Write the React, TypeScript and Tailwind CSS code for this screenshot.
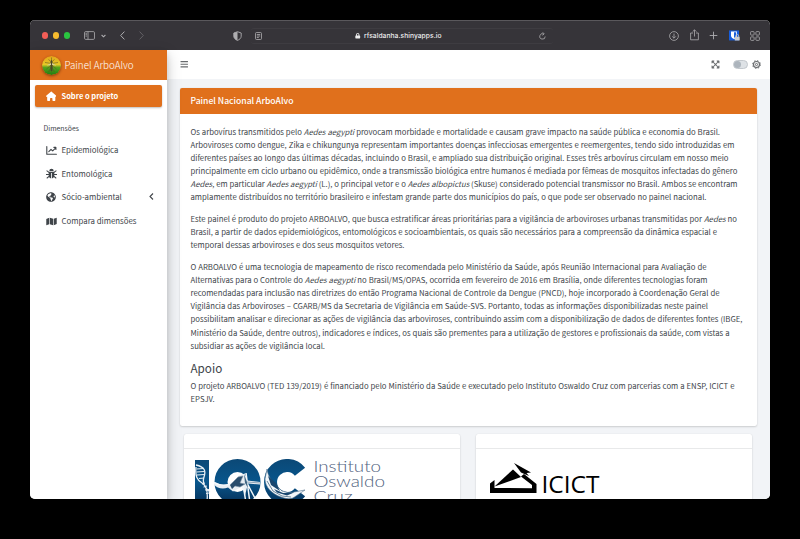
import type { ReactNode } from "react";
import { FaBars, FaExpandArrowsAlt, FaGlobeAmericas, FaLock } from "react-icons/fa";
import { FaHouse } from "react-icons/fa6";

type TextLine = { width: string; content: ReactNode };

const intro: TextLine[] = [
  { width: "w-[529.5px]", content: <>Os arbovírus transmitidos pelo <i>Aedes aegypti</i> provocam morbidade e mortalidade e causam grave impacto na saúde pública e economia do Brasil.</> },
  { width: "w-[544px]", content: <>Arboviroses como dengue, Zika e chikungunya representam importantes doenças infecciosas emergentes e reemergentes, tendo sido introduzidas em</> },
  { width: "w-[538px]", content: <>diferentes países ao longo das últimas décadas, incluindo o Brasil, e ampliado sua distribuição original. Esses três arbovírus circulam em nosso meio</> },
  { width: "w-[547px]", content: <>principalmente em ciclo urbano ou epidêmico, onde a transmissão biológica entre humanos é mediada por fêmeas de mosquitos infectadas do gênero</> },
  { width: "w-[547px]", content: <><i>Aedes</i>, em particular <i>Aedes aegypti</i> (L.), o principal vetor e o <i>Aedes albopictus</i> (Skuse) considerado potencial transmissor no Brasil. Ambos se encontram</> },
  { width: "w-[516px]", content: <>amplamente distribuídos no território brasileiro e infestam grande parte dos municípios do país, o que pode ser observado no painel nacional.</> },
];

const product: TextLine[] = [
  { width: "w-[546.5px]", content: <>Este painel é produto do projeto ARBOALVO, que busca estratificar áreas prioritárias para a vigilância de arboviroses urbanas transmitidas por <i>Aedes</i> no</> },
  { width: "w-[526.5px]", content: <>Brasil, a partir de dados epidemiológicos, entomológicos e socioambientais, os quais são necessários para a compreensão da dinâmica espacial e</> },
  { width: "w-[214px]", content: <>temporal dessas arboviroses e dos seus mosquitos vetores.</> },
];

const technology: TextLine[] = [
  { width: "w-[516px]", content: <>O ARBOALVO é uma tecnologia de mapeamento de risco recomendada pelo Ministério da Saúde, após Reunião Internacional para Avaliação de</> },
  { width: "w-[517px]", content: <>Alternativas para o Controle do <i>Aedes aegypti</i> no Brasil/MS/OPAS, ocorrida em fevereiro de 2016 em Brasília, onde diferentes tecnologias foram</> },
  { width: "w-[529px]", content: <>recomendadas para inclusão nas diretrizes do então Programa Nacional de Controle da Dengue (PNCD), hoje incorporado à Coordenação Geral de</> },
  { width: "w-[517.5px]", content: <>Vigilância das Arboviroses – CGARB/MS da Secretaria de Vigilância em Saúde-SVS. Portanto, todas as informações disponibilizadas neste painel</> },
  { width: "w-[552px]", content: <>possibilitam analisar e direcionar as ações de vigilância das arboviroses, contribuindo assim com a disponibilização de dados de diferentes fontes (IBGE,</> },
  { width: "w-[539px]", content: <>Ministério da Saúde, dentre outros), indicadores e índices, os quais são prementes para a utilização de gestores e profissionais da saúde, com vistas a</> },
  { width: "w-[134.5px]", content: <>subsidiar as ações de vigilância local.</> },
];

const support: TextLine[] = [
  { width: "w-[544px]", content: <>O projeto ARBOALVO (TED 139/2019) é financiado pelo Ministério da Saúde e executado pelo Instituto Oswaldo Cruz com parcerias com a ENSP, ICICT e</> },
  { width: "w-[23.5px]", content: <>EPSJV.</> },
];

function Paragraph({ lines }: { lines: TextLine[] }) {
  return (
    <p className="mb-[8.75px]">
      {lines.map((line, i) => (
        <span key={i} className={`block h-[13.12px] whitespace-nowrap [text-align-last:justify] ${line.width}`}>
          {line.content}
        </span>
      ))}
    </p>
  );
}

function TitleBar() {
  return (
    <div className="flex h-[30px] shrink-0 items-center border-t border-[#5a585c] bg-[#363439] text-[#aeadb0]">
      <div className="flex w-[60px] gap-[4.5px] pl-[11.5px]">
        <span className="size-[6.6px] rounded-full bg-[#f25e57]" />
        <span className="size-[6.6px] rounded-full bg-[#f6bb2e]" />
        <span className="size-[6.6px] rounded-full bg-[#2ac440]" />
      </div>
      <div className="flex w-[142px] items-center">
        <svg className="ml-[-6px] h-[9px] w-[11px]" viewBox="0 0 11 9" fill="none" stroke="currentColor" strokeWidth="0.8">
          <rect x="0.5" y="0.6" width="10" height="7.8" rx="1.2" />
          <path d="M4 .6v7.8M1.5 2.3h1.4M1.5 3.7h1.4M1.5 5.1h1.4" />
        </svg>
        <svg className="ml-[6px] h-[4px] w-[5px]" viewBox="0 0 5 4" fill="none" stroke="currentColor" strokeWidth="1.1"><path d="M.6 1 2.5 2.8 4.4 1" /></svg>
        <svg className="ml-[13.5px] h-[9px] w-[5px]" viewBox="0 0 5 9" fill="none" stroke="currentColor" strokeWidth="1"><path d="M4.4.6.7 4.5l3.7 3.9" /></svg>
        <svg className="ml-[14.5px] h-[9px] w-[5px] text-[#636166]" viewBox="0 0 5 9" fill="none" stroke="currentColor" strokeWidth="1"><path d="m.6.6 3.7 3.9L.6 8.4" /></svg>
      </div>
      <svg className="ml-[1px] h-[10px] w-[9px]" viewBox="0 0 9 10">
        <path d="M4.5.7 8.2 2v3.2c0 2-1.6 3.3-3.7 4.2C2.4 8.5.8 7.2.8 5.2V2z" fill="none" stroke="currentColor" strokeWidth=".9" />
        <path d="M4.5.7v8.7C2.4 8.5.8 7.2.8 5.2V2z" fill="currentColor" />
      </svg>
      <div className="ml-[8.5px] flex h-[16px] w-[302px] items-center rounded-[3px] border-y border-[#3e3c41] px-[4px]">
        <svg className="h-[8px] w-[7px]" viewBox="0 0 7 8" fill="none" stroke="currentColor" strokeWidth=".8">
          <rect x=".5" y=".5" width="6" height="7" rx="1" />
          <path d="M1.8 2.5h3.4M1.8 4h3.4M1.8 5.5h2" />
        </svg>
        <div className="flex flex-1 items-center justify-center gap-[3px] pt-[1px] pr-[3px] font-['Inter'] text-[6.7px] font-medium tracking-[0.05px] text-[#eeeeef]">
          <FaLock className="size-[5.5px]" />
          <span>rfsaldanha.shinyapps.io</span>
        </div>
        <svg className="mr-[3px] h-[8px] w-[7px]" viewBox="0 0 7 8" fill="none" stroke="currentColor" strokeWidth=".8">
          <path d="M6.2 4.5a2.7 2.7 0 1 1-1.5-2.500M3.7.3l1.500 1.600-1.700 1.400" />
        </svg>
      </div>
      <div className="ml-auto flex items-center gap-[10.5px] pr-[10px]">
        <svg className="size-[10px]" viewBox="0 0 10 10" fill="none" stroke="currentColor" strokeWidth=".8">
          <circle cx="5" cy="5" r="4.4" />
          <path d="M5 2.5v4.700M3.200 5.400 5 7.200l1.800-1.800" />
        </svg>
        <svg className="mt-[-1px] h-[12px] w-[9px]" viewBox="0 0 9 12" fill="none" stroke="currentColor" strokeWidth=".8">
          <path d="M3 4H.6v6.800h7.800V4H6M4.500 7.500V.9M2.600 2.700 4.500.8l1.900 1.900" />
        </svg>
        <svg className="mt-[-1px] size-[9px]" viewBox="0 0 9 9" fill="none" stroke="currentColor" strokeWidth=".9"><path d="M4.5.7v7.600M.7 4.500h7.600" /></svg>
        <svg className="h-[11px] w-[11px]" viewBox="0 0 11 11">
          <rect width="10" height="10" y=".4" fill="#175ddc" />
          <path d="M2 1.500h6v4.300c0 1.500-1.500 2.600-3 3.300-1.500-.7-3-1.800-3-3.300z" fill="#fff" />
          <path d="M5 2.300h2.200v3.500C7.200 6.800 6 7.500 5 8z" fill="#175ddc" />
          <path d="M6.800 7V6a1.500 1.500 0 0 1 3 0v1" fill="none" stroke="#b5b7bc" strokeWidth=".9" />
          <rect x="5.700" y="6.800" width="5" height="3.800" rx=".7" fill="#c9cacd" />
        </svg>
        <svg className="size-[10px]" viewBox="0 0 10 10" fill="none" stroke="currentColor" strokeWidth=".8">
          <rect x=".6" y=".6" width="3.500" height="3.500" rx=".7" />
          <rect x="5.900" y=".6" width="3.500" height="3.500" rx=".7" />
          <rect x=".6" y="5.900" width="3.500" height="3.500" rx=".7" />
          <rect x="5.900" y="5.900" width="3.500" height="3.500" rx=".7" />
        </svg>
      </div>
    </div>
  );
}

function BrandLogo() {
  return (
    <svg className="size-[19px] rounded-full shadow-[0_1px_3px_rgba(0,0,0,0.45)]" viewBox="0 0 19 19">
      <defs>
        <linearGradient id="sky" x1="0" y1="0" x2="0" y2="1">
          <stop offset="0" stopColor="#e3a51a" />
          <stop offset=".45" stopColor="#e6c927" />
          <stop offset=".6" stopColor="#57a51d" />
          <stop offset="1" stopColor="#1e7d12" />
        </linearGradient>
      </defs>
      <circle cx="9.500" cy="9.500" r="9.500" fill="url(#sky)" />
      <path d="M9.500 1.500v15M9.500 6 6.500 3.500M9.500 6l3-2.500M9.500 7.500 3 6.500M9.500 7.500l6.500-1M9.500 9l-5 4M9.500 9l5 4M9.500 10.500 6.500 16M9.500 10.500l3 5.500" stroke="#5c5220" strokeWidth=".55" fill="none" />
      <path d="M9.500 4c1.300 1 1.300 4 .8 11h-1.600C8.200 8 8.200 5 9.500 4z" fill="#4a4628" />
      <path d="M9 7 4.500 9.500l4.500-.4zM10 7l4.500 2.500-4.500-.4z" fill="#d8cf95" />
    </svg>
  );
}

function ChartIcon() {
  return (
    <svg className="h-[9px] w-[11px]" viewBox="0 0 11 9" fill="none" stroke="currentColor" strokeWidth="1.100" strokeLinejoin="round" strokeLinecap="round">
      <path d="M.8.600v7.600h9.600M2.800 5.600 5 3.300l1.700 1.500 3-3M7.900 1.400h2v2" />
    </svg>
  );
}

function BugIcon() {
  return (
    <svg className="h-[11px] w-[11px]" viewBox="0 0 11 11">
      <path d="M3.300 3a2.200 2.200 0 0 1 4.400 0z" fill="currentColor" />
      <path d="M2.700 3.700h5.600v3.600c0 1.900-1 2.900-2.400 3.100V5h-.8v5.400C3.700 10.200 2.700 9.200 2.700 7.300z" fill="currentColor" />
      <path d="M3 4.400 1 2.900M8 4.400l2-1.500M2.800 6.500H.3M8.200 6.500h2.500M3 8.300 1.100 10M8 8.300 9.900 10" stroke="currentColor" strokeWidth="1.050" strokeLinecap="round" />
    </svg>
  );
}

function MapIcon() {
  return (
    <svg className="h-[9px] w-[12px]" viewBox="0 0 12 9" fill="currentColor">
      <path d="M.3 1.700 3.500.4v7L.3 8.700zM4.200.4l3.600 1.200v7L4.200 7.400zM8.500 1.600 11.700.3v7L8.500 8.600z" />
    </svg>
  );
}

function GearIcon() {
  return (
    <svg className="ml-[4px] size-[9px]" viewBox="0 0 18 18" fill="none" stroke="currentColor">
      <circle cx="9" cy="9" r="6" strokeWidth="2.200" />
      <circle cx="9" cy="9" r="7.800" strokeWidth="2" strokeDasharray="3 3.126" />
      <circle cx="9" cy="9" r="2.200" strokeWidth="2" />
    </svg>
  );
}

function NavItem({ icon, label, chevron }: { icon: ReactNode; label: string; chevron?: boolean }) {
  return (
    <div className="flex h-[23.6px] items-center pr-[8.5px] pl-[10.5px] text-[#40454a]">
      <span className="flex w-[11px] justify-center pt-[1px]">{icon}</span>
      <span className="ml-[5px] text-[7.85px]">{label}</span>
      {chevron && (
        <svg className="ml-auto h-[7px] w-[5px]" viewBox="0 0 5 7" fill="none" stroke="currentColor" strokeWidth="1.100">
          <path d="M4 .5 1 3.500l3 3" />
        </svg>
      )}
    </div>
  );
}

function Sidebar() {
  return (
    <aside className="z-10 w-[137px] shrink-0 bg-white shadow-[0_5px_14px_rgba(0,0,0,0.2),0_3px_6px_rgba(0,0,0,0.12)]">
      <div className="flex h-[30px] items-center bg-[#e0701c] pl-[11.5px] text-white">
        <BrandLogo />
        <span className="ml-[4px] text-[9.8px] font-light">Painel ArboAlvo</span>
      </div>
      <nav className="px-[5px] pt-[5px]">
        <div className="flex h-[22px] items-center rounded-[2px] bg-[#e0701c] pl-[10.5px] text-white shadow-[0_1px_2px_rgba(0,0,0,0.25)]">
          <FaHouse className="size-[10.5px]" />
          <span className="ml-[5.5px] text-[7.5px] font-bold">Sobre o projeto</span>
        </div>
        <div className="mt-[15px] mb-[3px] flex h-[13px] items-center pl-[8.5px] text-[6.9px] text-[#40454a]">Dimensões</div>
        <NavItem icon={<ChartIcon />} label="Epidemiológica" />
        <NavItem icon={<BugIcon />} label="Entomológica" />
        <NavItem icon={<FaGlobeAmericas className="size-[10px]" />} label="Sócio-ambiental" chevron />
        <NavItem icon={<MapIcon />} label="Compara dimensões" />
      </nav>
    </aside>
  );
}

function IocLogo() {
  return (
    <svg className="h-[50px] w-[210px]" viewBox="0 0 210 50">
      <defs>
        <linearGradient id="navy" gradientUnits="userSpaceOnUse" x1="0" y1="0" x2="0" y2="46">
          <stop offset="0" stopColor="#0b4876" />
          <stop offset=".5" stopColor="#08568c" />
          <stop offset="1" stopColor="#062f57" />
        </linearGradient>
      </defs>
      <path d="M1 1h14v44H1z" fill="url(#navy)" />
      <circle cx="43.500" cy="23" r="16.500" fill="none" stroke="url(#navy)" strokeWidth="13" />
      <path d="M106 12.800a16.500 16.500 0 1 0 0 20.400" fill="none" stroke="url(#navy)" strokeWidth="13" />
      <path d="M2 6c9 2 10 6 8 12s1 11 6 15M2 8c-1 9 1 13 6 16s6 9 5 18" fill="none" stroke="#e9f0f5" strokeWidth="1.300" />
      <path d="m2.500 10 7.500-.5M2.500 13l8-.5M3 16l7.500-.5M5 19.500l5-.5M8 25l3-1M9.500 28l3.500-1M11 31l4-.5M12 34.500l3-.5" stroke="#e9f0f5" strokeWidth="1" />
      <path d="M20 23c7 3.500 13 4 19 0l6-6.500 6-2 2 7 13 1.500v2.500l-12-1-3 12-3-9-9 5-5-4c-5 2-11 1-14-3z" fill="#e8eef3" />
      <path d="M20 23.500c7 4 13 4 20-.5M52 14l4 30M53 24l9 17M49 25l3 19" fill="none" stroke="#f3f7fa" strokeWidth="1.500" />
      <path d="m36 26 8-8 5-1-3 7 5 1-5 3-5-1-3 3" fill="#284c6c" stroke="#7890a5" strokeWidth=".6" />
      <path d="m50 15 3 8 1 6-3-5" fill="#416785" />
      <path d="m53 23 13 1" stroke="#64839c" strokeWidth=".7" />
      <path d="M73 10c1 7 4 11 8 15l7 7c5 1 8 3 12 1l11-2-9 6c-5 4-9 3-15 1-9-3-16-10-16-18z" fill="#f2f6f9" stroke="#4d6d89" strokeWidth=".6" />
      <path d="m74 17 3 9 9 6-4-8zM80 30l9 4 11-.5-7 3-10-3z" fill="#18466f" />
      <path d="m73 22 6 10 9 5 9 1" fill="none" stroke="#315777" strokeWidth=".7" />
      <g fill="#51627e" fontFamily="Lato" fontWeight="300" fontSize="15.500">
        <text x="119.500" y="13" textLength="67.500" lengthAdjust="spacingAndGlyphs">Instituto</text>
        <text x="119.500" y="28" textLength="71.500" lengthAdjust="spacingAndGlyphs">Oswaldo</text>
        <text x="119.500" y="43" textLength="39" lengthAdjust="spacingAndGlyphs">Cruz</text>
      </g>
    </svg>
  );
}

function IcictLogo() {
  return (
    <svg className="h-[34px] w-[114px]" viewBox="0 0 114 34">
      <path d="M0 20.500 4.500 17v8l37.500.2V22L31 13.500l3-2.500 12.500 10v9H0z" />
      <path d="M4.500 23.500 23 6.500l8 7.500z" />
      <path d="m24 0 17 9.500-4.500.5 2.500 3-8-3.500z" />
      <text x="51.500" y="30" fontFamily="Open Sans" fontSize="24.500" textLength="58" lengthAdjust="spacingAndGlyphs">ICICT</text>
    </svg>
  );
}

export default function App() {
  return (
    <div className="h-[539px] w-[800px] overflow-hidden bg-black px-[30px] pt-[20px] font-['Noto_Sans_CJK_SC',sans-serif] text-[#40454a]">
      <div className="flex h-[479px] w-[740px] flex-col overflow-hidden rounded-[5px] bg-white">
        <TitleBar />
        <div className="flex min-h-0 flex-1">
          <Sidebar />
          <div className="flex min-w-0 flex-1 flex-col bg-[#f2f4f7]">
            <header className="flex h-[29px] shrink-0 items-center bg-white pr-[9px] pl-[13px] text-[#686b6e]">
              <FaBars className="size-[8.5px]" />
              <FaExpandArrowsAlt className="ml-auto size-[9px]" />
              <span className="ml-[13px] flex h-[8.5px] w-[15px] items-center rounded-full border border-[#c3c8cd] bg-[#dee2e6]">
                <span className="h-[6.5px] w-[7px] rounded-full bg-[#adb5bd]" />
              </span>
              <GearIcon />
            </header>
            <main className="min-h-0 flex-1 overflow-hidden pt-[9px] pr-[13px] pl-[13px]">
              <section className="h-[338px] overflow-hidden rounded-[2px] bg-white shadow-[0_0_1px_rgba(0,0,0,0.13),0_1px_2px_rgba(0,0,0,0.15)]">
                <h3 className="flex h-[25.5px] items-center bg-[#e0701c] pl-[10.5px] text-[8.6px] font-medium text-white">Painel Nacional ArboAlvo</h3>
                <div className="pt-[11px] pl-[10.5px] text-[7.75px] leading-[13.12px]">
                  <Paragraph lines={intro} />
                  <Paragraph lines={product} />
                  <Paragraph lines={technology} />
                  <h4 className="mb-[4.4px] text-[11.7px] leading-[14.4px]">Apoio</h4>
                  <Paragraph lines={support} />
                </div>
              </section>
              <div className="mt-[8px] flex gap-[16px] pr-[5px] pl-[3.500px]">
                <section className="h-[90px] w-[276.5px] rounded-[2px] bg-white shadow-[0_0_1px_rgba(0,0,0,0.13),0_1px_2px_rgba(0,0,0,0.15)]">
                  <div className="h-[14.5px] border-b border-[#e8e9ea]" />
                  <div className="pt-[10.5px] pl-[10.5px]"><IocLogo /></div>
                </section>
                <section className="h-[90px] w-[276.5px] rounded-[2px] bg-white shadow-[0_0_1px_rgba(0,0,0,0.13),0_1px_2px_rgba(0,0,0,0.15)]">
                  <div className="h-[14.5px] border-b border-[#e8e9ea]" />
                  <div className="pt-[14px] pl-[14.5px]"><IcictLogo /></div>
                </section>
              </div>
            </main>
          </div>
        </div>
      </div>
    </div>
  );
}
